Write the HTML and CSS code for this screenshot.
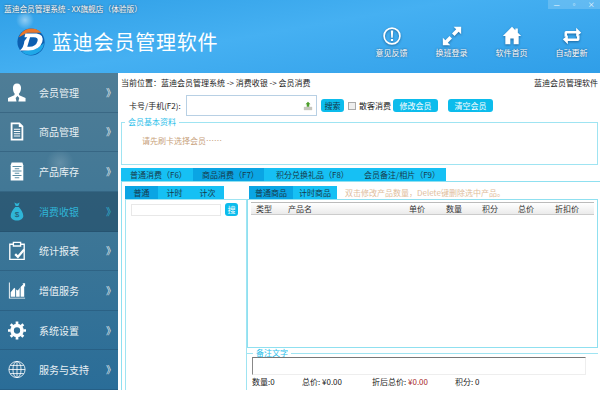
FILE: index.html
```html
<!DOCTYPE html>
<html lang="zh">
<head>
<meta charset="utf-8">
<title>蓝迪会员管理系统</title>
<link rel="stylesheet" href="styles.css">
</head>
<body>
<div class="app">
  <header class="top">
    <div class="caption">
      <span class="title">蓝迪会员管理系统 - XX旗舰店（体验版）</span>
      <div class="winbtns"><span>—</span><span>▫</span><span>×</span></div>
    </div>
    <div class="brandbar">
      <div class="brand">
        <svg class="logo" viewBox="0 0 32 30">
          <circle cx="16" cy="15" r="14.5" fill="#0c5fb0"/>
          <path d="M3 10A14.5 14.5 0 0 1 27 5L12 5Z" fill="#e8762a"/>
          <path d="M6 25A14.5 14.5 0 0 0 30 16L22 22Z" fill="#1fa8e8"/>
          <path d="M10 6H22Q30 7 28 15Q25 24 13 24H4Q8 22 9 14L12 10H9ZM15 10L12 20Q21 21 23 14Q24 10 19 10Z" fill="#fff"/>
        </svg>
        <span class="appname">蓝迪会员管理软件</span>
      </div>
      <nav class="tools">
        <a class="tool">
          <svg viewBox="0 0 24 24"><circle cx="12" cy="12" r="9.5" fill="none" stroke="#fff" stroke-width="2"/><path d="M10.6 5.500h2.800l-.5 8.500h-1.800zM10.700 15.500h2.600v2.600h-2.600z" fill="#fff"/></svg>
          <span>意见反馈</span>
        </a>
        <a class="tool">
          <svg viewBox="0 0 24 24"><path d="M23 1v9l-3-3-5 5-3-3 5-5-3-3zM1 23v-9l3 3 5-5 3 3-5 5 3 3z" fill="#fff"/></svg>
          <span>换班登录</span>
        </a>
        <a class="tool">
          <svg viewBox="0 0 24 24"><path d="M12 1L1 12h3v10h6v-7h4v7h6V12h3l-4-4V3h-3v2z" fill="#fff"/></svg>
          <span>软件首页</span>
        </a>
        <a class="tool">
          <svg viewBox="0 0 24 24"><path d="M3 13V8q0-2 2-2h12V2l6 6-6 5V9H6v4zM21 11v5q0 2-2 2H7v4l-6-6 6-5v4h11v-4z" fill="#fff"/></svg>
          <span>自动更新</span>
        </a>
      </nav>
    </div>
  </header>

  <div class="body">
    <aside class="side">
      <a class="item"><svg viewBox="0 0 20 20"><path d="M10 0c3 0 4.500 2 4.500 5s-1.500 6-2.500 6.500l.5 1.500 7 3v4h-8l1-4-2-2-2 2 1 4H0v-4l7-3 .5-1.500C6.500 11 5.500 8 5.500 5S7 0 10 0z" fill="#fff"/></svg><span>会员管理</span><b>》</b></a>
      <a class="item"><svg viewBox="0 0 20 20"><path d="M3 0h10l4 4v16H3z M5 2v16h10V5h-3V2z" fill="#fff" fill-rule="evenodd"/><path d="M6.500 7h7v1h-7zm0 2.500h7v1h-7zm0 2.500h7v1h-7zm0 2.500h7v1h-7z" fill="#fff"/></svg><span>商品管理</span><b>》</b></a>
      <a class="item"><svg viewBox="0 0 20 20"><path d="M4 0h12l1 3v17H3V3z" fill="#fff"/><path d="M5 4h10v1H5zm0 5h10v1H5zm0 5h10v1H5z" fill="#5c8ea5"/><path d="M7.500 6.500h5v1h-5zm0 5h5v1h-5zm0 5h5v1h-5z" fill="#5c8ea5"/></svg><span>产品库存</span><b>》</b></a>
      <a class="item on"><svg viewBox="0 0 20 20"><path d="M7 0l3 1.500L13 0l-1.500 4h-3zM8 5h4c3 3 5 7 5 10 0 3-3 5-7 5s-7-2-7-5c0-3 2-7 5-10z" fill="#2fb6d8"/><text x="10" y="16" text-anchor="middle" font-size="9" fill="#234f68" font-family="Liberation Sans">$</text></svg><span>消费收银</span><b>》</b></a>
      <a class="item"><svg viewBox="0 0 20 20"><path d="M6 3H2v17h16V3h-4" fill="none" stroke="#fff" stroke-width="1.500"/><path d="M6 1h8v4H6z" fill="none" stroke="#fff" stroke-width="1.500"/><path d="M8 14l3 3 7-8" fill="none" stroke="#fff" stroke-width="2.500"/></svg><span>统计报表</span><b>》</b></a>
      <a class="item"><svg viewBox="0 0 20 20"><path d="M1 1v18h18v-1H2V1z" fill="#fff"/><path d="M3 17v-5l4-5 1 1v9zM9 17V9l2 1 2-3v10zM14 17V6l3-3-1-1h3v4l-1-1v12z" fill="#fff"/></svg><span>增值服务</span><b>》</b></a>
      <a class="item"><svg viewBox="0 0 20 20"><circle cx="10" cy="10" r="5.500" fill="none" stroke="#fff" stroke-width="4"/><path d="M10 0v20M0 10h20M3 3l14 14M17 3L3 17" stroke="#fff" stroke-width="3" stroke-dasharray="3 14"/></svg><span>系统设置</span><b>》</b></a>
      <a class="item"><svg viewBox="0 0 20 20"><g fill="none" stroke="#fff" stroke-width=".9"><circle cx="10" cy="10" r="9"/><ellipse cx="10" cy="10" rx="4.500" ry="9"/><path d="M10 1v18M1 10h18M2.500 5.500h15M2.500 14.500h15"/></g></svg><span>服务与支持</span><b>》</b></a>
    </aside>

    <main class="main">
      <div class="crumbs">
        <span>当前位置：蓝迪会员管理系统 -&gt; 消费收银 -&gt; 会员消费</span>
        <span>蓝迪会员管理软件</span>
      </div>
      <div class="search">
        <label class="cardlabel">卡号/手机(F2):</label>
        <div class="cardinput">
          <svg viewBox="0 0 12 12"><path d="M1 7h10v4H1z" fill="#c5c5bd"/><path d="M6 1l3 3H7.500v3h-3V4H3z" fill="#4e9e2d"/></svg>
        </div>
        <button class="btn small">搜索</button>
        <span class="check"></span><span class="checklabel">散客消费</span>
        <button class="btn">修改会员</button>
        <button class="btn">清空会员</button>
      </div>
      <fieldset class="member">
        <legend>会员基本资料</legend>
        <p>请先刷卡选择会员……</p>
      </fieldset>
      <div class="tabs">
        <span>普通消费（F6）</span>
        <span class="active">商品消费（F7）</span>
        <span>积分兑换礼品（F8）</span>
        <span>会员备注/相片（F9）</span>
      </div>
      <div class="panel">
        <section class="left">
          <div class="subtabs">
            <span class="active">普通</span><span>计时</span><span>计次</span>
          </div>
          <div class="leftbox">
            <div class="find"><span class="findinput"></span><button class="findbtn">搜</button></div>
          </div>
        </section>
        <section class="right">
          <div class="subhead">
            <div class="subtabs wide">
              <span class="active">普通商品</span><span>计时商品</span>
            </div>
            <span class="hint">双击修改产品数量，Delete键删除选中产品。</span>
          </div>
          <div class="gridbox">
            <div class="thead">
              <span class="c1">类型</span><span class="c2">产品名</span><span class="c3">单价</span><span class="c4">数量</span><span class="c5">积分</span><span class="c6">总价</span><span class="c7">折扣价</span>
            </div>
          </div>
          <fieldset class="remark">
            <legend>备注文字</legend>
            <div class="remarkinput"></div>
          </fieldset>
          <div class="totals">
            <span class="t1">数量:0</span>
            <span class="t2">总价: ¥0.00</span>
            <span class="t3">折后总价: <em>¥0.00</em></span>
            <span>积分: 0</span>
          </div>
        </section>
      </div>
    </main>
  </div>
</div>
</body>
</html>
```

FILE: styles.css
```css
* { box-sizing: border-box; }
html, body { margin: 0; padding: 0; background: #fff; }
body { width: 600px; height: 405px; overflow: hidden; font-family: "Noto Sans CJK SC", "Liberation Sans", sans-serif; font-size: 8px; color: #333; }
.app { width: 600px; height: 390px; display: flex; flex-direction: column; }

.top { height: 73px; flex: none; display: flex; flex-direction: column; background: radial-gradient(circle at 25px 20px, rgba(255,255,255,.45) 0, rgba(255,255,255,0) 9px), linear-gradient(170deg, #2f9fe6 0%, #45b0f2 45%, #2f9ee8 100%); }
.caption { height: 20px; display: flex; justify-content: space-between; align-items: flex-start; padding: 4px 0 0 4px; }
.title { color: #fff; font-size: 7.7px; text-shadow: 0 0 2px #234; line-height: 10px; }
.winbtns { display: flex; margin-top: -4px; width: 52px; height: 9px; background: rgba(255,255,255,.18); }
.winbtns span { flex: 1; color: #fff; font-size: 7px; line-height: 9px; text-align: center; }
.brandbar { flex: 1; display: flex; justify-content: space-between; padding: 6px 11px 0 16px; }
.brand { display: flex; align-items: flex-start; gap: 6px; margin-top: 1px; }
.logo { width: 30px; height: 30px; }
.appname { color: #fff; font-size: 20px; line-height: 30px; letter-spacing: .8px; }
.tools { display: flex; gap: 25px; }
.tool { width: 35px; display: flex; flex-direction: column; align-items: center; color: #fff; font-size: 8px; line-height: 10px; text-shadow: 0 0 2px #246; white-space: nowrap; }
.tool svg { width: 24px; height: 20px; margin-bottom: 2px; filter: drop-shadow(0 1px 1px rgba(0,40,80,.5)); }

.body { flex: 1; display: flex; min-height: 0; }
.side { width: 118px; flex: none; display: flex; flex-direction: column; background: radial-gradient(circle at 60px 90px, rgba(255,255,255,.16) 0, rgba(255,255,255,0) 14px), linear-gradient(180deg, #4f7d96 0%, #3d7696 50%, #2a6d98 100%); }
.item { flex: 1; display: flex; align-items: center; padding-left: 8px; color: #e8f0f4; font-size: 10px; border-bottom: 1px solid rgba(30,70,100,.35); }
.item svg { width: 18px; height: 19px; flex: none; margin-right: 13px; }
.item span { width: 67px; white-space: nowrap; }
.item b { font-weight: 400; font-size: 10px; width: 10px; }
.item.on { background: rgba(30,70,95,.55); color: #2fb6d8; }

.main { flex: 1; min-width: 0; display: flex; flex-direction: column; padding: 4px 2px 0 3px; color: #222; }
.crumbs { display: flex; justify-content: space-between; font-size: 8px; line-height: 11px; }
.search { display: flex; align-items: center; height: 21px; margin-top: 7px; }
.cardlabel { width: 65px; padding-left: 8px; white-space: nowrap; }
.cardinput { width: 131px; height: 21px; border: 1px solid #b8d0e4; background: #fff; display: flex; align-items: center; justify-content: flex-end; padding-right: 3px; }
.cardinput svg { width: 10px; height: 10px; }
.btn { height: 13px; width: 45px; padding: 0; border: 0; border-radius: 3px; background: #0cbcec; color: #fff; font: inherit; line-height: 13px; margin-right: 10px; }
.btn.small { width: 23px; margin: 0 0 0 4px; color: #16384a; }
.check { width: 8px; height: 8px; border: 1px solid #aaa; background: #eee; margin-left: 4px; }
.checklabel { margin: 0 2px 0 3px; white-space: nowrap; }

.member { margin: 2px 0 0; padding: 0; height: 47px; border: 1px solid #9fe4f2; min-width: 0; }
.member legend, .remark legend { color: #2cc0ea; font-size: 8px; line-height: 8px; padding: 0 3px; margin-left: 3px; }
.member p { margin: 10px 0 0 20px; color: #c8a27c; line-height: 10px; }

.tabs { display: flex; height: 13px; margin-top: 3px; flex: none; }
.tabs span { background: #16c0f4; line-height: 13px; padding-left: 9px; font-size: 8px; white-space: nowrap; width: 72px; color: #173a4b; }
.tabs span:nth-child(2) { width: 71px; }
.tabs span:nth-child(3) { width: 90px; padding-left: 12px; }
.tabs span:nth-child(4) { width: 92px; padding-left: 10px; }
.tabs .active { background: #0aa5e4; }

.panel { flex: 1; min-height: 0; display: flex; border-top: 1px solid #8fe0f0; border-left: 1px solid #8fe0f0; padding: 4px 0 0 3px; margin-right: -2px; }
.left { width: 122px; display: flex; flex-direction: column; flex: none; }
.subtabs { display: flex; height: 13px; flex: none; }
.subtabs span { width: 33px; background: #16c0f4; text-align: center; line-height: 13px; color: #173a4b; }
.subtabs .active { background: #0aa5e4; }
.subtabs.wide span { width: 44px; }
.leftbox { flex: 1; border: 1px solid #9fe4f2; border-bottom: 0; padding: 3px 5px; }
.find { display: flex; align-items: center; gap: 4px; }
.findinput { width: 90px; height: 12px; border: 1px solid #e8e8e8; }
.findbtn { width: 13px; height: 13px; padding: 0; border: 0; border-radius: 3px; background: #0cbcec; color: #fff; font: inherit; line-height: 13px; }

.right { flex: 1; min-width: 0; display: flex; flex-direction: column; padding-right: 2px; }
.subhead { display: flex; height: 13px; flex: none; padding-left: 2px; }
.hint { margin-left: 8px; color: #e0bd9c; line-height: 13px; white-space: nowrap; }
.gridbox { height: 149px; flex: none; border: 1px solid #8fe0f0; padding: 2px 3px 0 3px; }
.thead { height: 13px; display: flex; align-items: center; border-top: 1px solid #bbb; border-bottom: 1px solid #ccc; background: linear-gradient(#fff, #ebebeb); color: #333; padding-left: 5px; }
.c1 { width: 32px; } .c2 { width: 121px; } .c3 { width: 37px; } .c4 { width: 36px; } .c5 { width: 36px; } .c6 { width: 37px; }
.remark { margin: 1px 0 0; padding: 0 0 0 5px; border: 0; border-top: 1px solid #9fe4f2; min-width: 0; flex: none; }
.remark legend { margin-left: 1px; }
.remarkinput { width: 334px; height: 18px; margin-top: 0; border: 1px solid #eee; border-top: 1px solid #777; border-left: 1px solid #888; }
.totals { display: flex; margin: 2px 0 0 5px; line-height: 10px; color: #222; white-space: nowrap; }
.t1 { width: 50px; } .t2 { width: 70px; } .t3 { width: 83px; }
.totals em { font-style: normal; color: #a82a2a; }
```
